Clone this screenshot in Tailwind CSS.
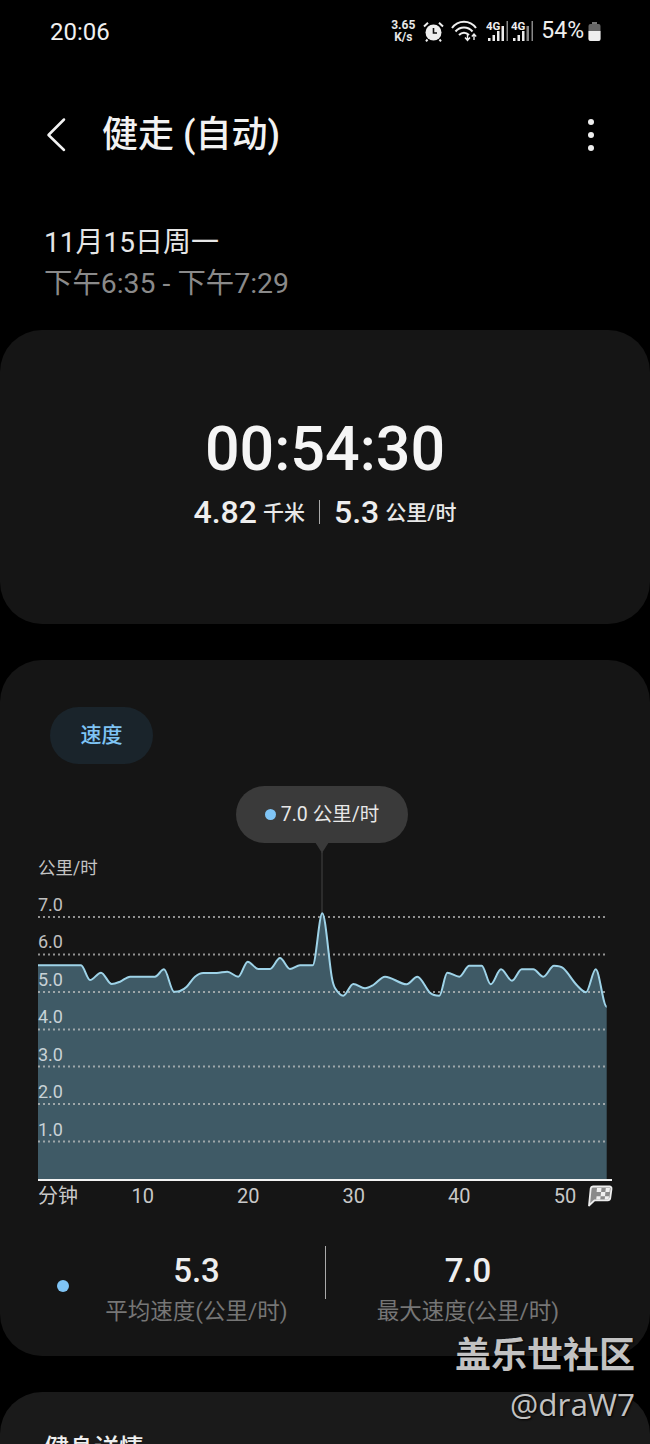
<!DOCTYPE html>
<html lang="zh-CN">
<head>
<meta charset="utf-8">
<title>健走 (自动)</title>
<script src="https://cdn.jsdelivr.net/npm/@tailwindcss/browser@4"></script>
</head>
<body class="bg-black">
<div class="relative w-[650px] h-[1444px] overflow-hidden bg-black text-white font-['Roboto','Noto_Sans_CJK_SC',sans-serif]">

  <!-- status bar -->
  <div class="flex items-center h-[62px] pl-[50px] pr-[49px]">
    <span class="text-[24px] text-[#f0f0f0] mt-[1px]">20:06</span>
    <div class="ml-auto flex items-center">
      <div class="w-[26px] text-center text-[12px] leading-[12px] font-bold text-[#e8e8e8]">3.65<br>K/s</div>
      <svg class="ml-[7px]" width="21" height="21" viewBox="0 0 21 21">
        <circle cx="10.5" cy="11.5" r="8" fill="#eee"/>
        <path d="M10.5 7v5h3.5" stroke="#111" stroke-width="1.6" fill="none"/>
        <path d="M1 5.5 5 1.8M20 5.5 16 1.8M4.5 18.5 3 20.3M16.5 18.5 18 20.3" stroke="#eee" stroke-width="2"/>
      </svg>
      <svg class="ml-[7px]" width="29" height="22" viewBox="0 0 29 22" fill="none" stroke="#eee" stroke-width="2">
        <path d="M1 8C7-.5 19-.5 25 8M4.5 11.500C9 6 17 6 21.500 11.500M8 15c3-3 7-3 10 0"/>
        <path d="M16.500 14v6M14 17.500l2.500 3 2.500-3M23 20v-6M20.800 16.500l2.200-2.500 2.200 2.500" stroke-width="1.400"/>
      </svg>
      <svg class="ml-[6px]" width="22" height="22" viewBox="0 0 22 22">
        <text x="0" y="9.500" font-size="11.500" font-weight="700" fill="#eee">4G</text>
        <path d="M2 18h2.500v3H2zM6.500 15h2.500v6H6.500zM11 11h2.500v10H11zM15.500 6h2.500v15h-2.500z" fill="#eee"/>
        <path d="M20.500 1h1.500v20h-1.500z" fill="#888"/>
      </svg>
      <svg class="ml-[3px]" width="23" height="22" viewBox="0 0 23 22">
        <text x="0" y="9.500" font-size="11.500" font-weight="700" fill="#eee">4G</text>
        <path d="M2 18h2.500v3H2zM6.500 15h2.500v6H6.500zM11 11h2.500v10H11z" fill="#eee"/>
        <path d="M15.500 6h2.500v15h-2.500zM20.500 1H22v20h-1.500z" fill="#888"/>
      </svg>
      <span class="ml-[7px] text-[23px] text-[#eee]">54%</span>
      <svg class="ml-[4px]" width="13" height="19" viewBox="0 0 13 19">
        <path d="M4 0h5v2H4z" fill="#777"/>
        <rect x="0.500" y="2" width="12" height="17" rx="2" fill="#666"/>
        <path d="M.5 9h12v8a2 2 0 0 1-2 2h-8a2 2 0 0 1-2-2z" fill="#eee"/>
      </svg>
    </div>
  </div>

  <!-- header -->
  <div class="flex items-center h-[54px] mt-[46px] pl-[46px] pr-[56px]">
    <svg width="22" height="36" viewBox="0 0 22 36" fill="none" stroke="#f2f2f2" stroke-width="2.500" stroke-linecap="round" stroke-linejoin="round">
      <path d="M18 2.500 2.500 18 18 33"/>
    </svg>
    <h1 class="ml-[34px] text-[36px] leading-none font-medium text-[#f2f2f2]">健走 (自动)</h1>
    <div class="ml-auto flex flex-col gap-[7px]">
      <span class="w-[6px] h-[6px] rounded-full bg-[#eee]"></span>
      <span class="w-[6px] h-[6px] rounded-full bg-[#eee]"></span>
      <span class="w-[6px] h-[6px] rounded-full bg-[#eee]"></span>
    </div>
  </div>

  <!-- date -->
  <div class="pl-[44px] mt-[60px]">
    <p class="text-[28px] leading-[41px] text-[#e6e6e6]">11月15日周一</p>
    <p class="text-[28.400px] leading-[41px] text-[#8a8a8a]">下午6:35 - 下午7:29</p>
  </div>

  <!-- summary card -->
  <section class="mt-[26px] h-[294px] rounded-[42px] bg-[#151515] flex flex-col items-center pt-[84px]">
    <p class="text-[61px] leading-[70px] font-medium text-[#f5f5f5]">00:54:30</p>
    <div class="flex items-center mt-[15px] h-[26px]">
      <span class="text-[32px] font-medium text-[#eee]">4.82</span>
      <span class="ml-[6px] mt-[3px] text-[21px] font-medium text-[#e8e8e8]">千米</span>
      <span class="w-px h-[24px] bg-[#aaa] mx-[14px]"></span>
      <span class="text-[32px] font-medium text-[#eee]">5.3</span>
      <span class="ml-[6px] mt-[3px] text-[21px] font-medium text-[#e8e8e8]">公里/时</span>
    </div>
  </section>

  <!-- speed card -->
  <section class="relative mt-[36px] h-[696px] rounded-[42px] bg-[#151515] pt-[47px]">
    <div class="ml-[50px] w-[103px] h-[57px] rounded-full bg-[#1a242b] flex items-center justify-center text-[21px] font-medium text-[#7fc4f5]">速度</div>

    <div class="ml-[236px] mt-[22px] w-[172px] h-[57px] rounded-full bg-[#3a3a3a] flex items-center justify-center text-[19.500px] text-[#e8e8e8]">
      <span class="w-[11px] h-[11px] rounded-full bg-[#7fc4f5] mr-[5px]"></span>7.0 公里/时
    </div>

    <div class="relative h-[340px]">
      <svg id="speedChart" class="block" width="650" height="340" viewBox="0 843 650 340">
        <path d="M315 842h14l-7 11z" fill="#3a3a3a"/>
        <path d="M322 852v62" stroke="#444" stroke-width="1"/>
        <path id="speedFill" fill="#3f5a66"/>
        <g stroke="#c8c8c8" stroke-width="2" stroke-dasharray="2 3" opacity="0.7">
          <path d="M38 917h570M38 954.500h570M38 992h570M38 1029.500h570M38 1066.500h570M38 1104h570M38 1141.500h570"/>
        </g>
        <path id="speedLine" fill="none" stroke="#9ed3e8" stroke-width="2"/>
        <path d="M38 1180h574" stroke="#f2f2f2" stroke-width="2"/>
      </svg>
      <!-- axis labels over the plot -->
      <span class="absolute left-[38px] top-[14px] text-[17.500px] leading-[22px] text-[#c4c4c4]">公里/时</span>
      <div class="absolute left-[38px] top-[43px] text-[18px] leading-[37.420px] text-[#c0c0c0]">
        <p>7.0</p><p>6.0</p><p class="text-[#c8d2d6]">5.0</p><p class="text-[#c8d2d6]">4.0</p><p class="text-[#c8d2d6]">3.0</p><p class="text-[#c8d2d6]">2.0</p><p class="text-[#c8d2d6]">1.0</p>
      </div>
    </div>

    <div class="flex items-center h-[26px] pl-[38px] text-[20px] text-[#c8c8c8]">
      <span class="w-[52px]">分钟</span>
      <span class="w-[105.500px] text-center">10</span>
      <span class="w-[105.500px] text-center">20</span>
      <span class="w-[105.500px] text-center">30</span>
      <span class="w-[105.500px] text-center">40</span>
      <span class="w-[106px] text-center">50</span>
      <!-- chequered finish flag -->
      <svg class="-ml-[31px]" width="26" height="24" viewBox="0 0 26 24">
        <path d="M6 2.500h16.500a2 2 0 0 1 2 2.300l-1.300 9.500a2.500 2.500 0 0 1-2.500 2H7.500L2 21.500 3.700 4.500A2.500 2.500 0 0 1 6 2.500z" fill="#8a8a8a" stroke="#eee" stroke-width="1.800" stroke-linejoin="round"/>
        <path d="M10 4h4.500l-.4 4H9.600zM18.800 4H23l-.5 4h-4.100zM14.100 8h4.300l-.4 4.200h-4.400zM9.600 12.200H13.600l-.3 3.300H9.200zM18 12.200h4l-.4 3.300h-3.900z" fill="#f0f0f0"/>
      </svg>
    </div>

    <!-- stats -->
    <div class="flex items-start h-[80px] mt-[37px]">
      <div class="relative w-[325px] h-full text-center pl-[68px]">
        <span class="absolute left-[57px] top-[34px] w-[12px] h-[12px] rounded-full bg-[#7fc4f5]"></span>
        <p class="text-[33px] leading-[50px] font-medium text-[#eee]">5.3</p>
        <p class="text-[22.500px] leading-[30px] text-[#767676]">平均速度(公里/时)</p>
      </div>
      <span class="w-px h-[53px] bg-[#aaa]"></span>
      <div class="w-[284px] text-center">
        <p class="text-[33px] leading-[50px] font-medium text-[#eee]">7.0</p>
        <p class="text-[22.500px] leading-[30px] text-[#767676]">最大速度(公里/时)</p>
      </div>
    </div>
  </section>

  <!-- detail card, cut off by the screen -->
  <section class="mt-[36px] h-[200px] rounded-[42px] bg-[#1a1a1a] pl-[44px] pt-[40px]">
    <h2 class="text-[25px] leading-[34px] font-medium text-[#eee]">健身详情</h2>
  </section>

  <!-- watermark -->
  <div class="absolute right-[15px] top-[1333px] text-right text-[#c2c2c2] [text-shadow:1px_1px_2px_#000]">
    <p class="text-[36px] leading-[46px] font-bold">盖乐世社区</p>
    <p class="mt-[3px] text-[31.500px] leading-[44px] font-['Open_Sans',sans-serif]">@draW7</p>
  </div>
</div>

<script>
  // speed samples in page coordinates, read off the curve
  const pts = [[38,965.3],[81,965.3],[90,980],[101,972.7],[111.7,984],[120,981.7],[130,976.7],[155,976.7],[164,969.3],[174,991.7],[180,991],[186.7,986.7],[195,976.7],[203.3,973],[216.7,973],[227.3,971.7],[238.3,976.7],[247.7,961.7],[258.3,969],[270,969],[280,958],[290,969],[300,965.3],[312.7,965.3],[322.3,913.3],[331.7,976.7],[335,988],[343.3,995.7],[353.3,984],[365,988.3],[373.3,985],[385,976.7],[406.7,984.3],[417.3,976.7],[430,992.7],[439.3,995.7],[447.3,972.7],[459.3,976.7],[469.3,965.7],[481.7,965.7],[490.7,984.3],[501,969.3],[512,980.7],[521.7,969.3],[533.3,969.3],[543.3,976.7],[554,965.7],[563.3,968.3],[576.7,985],[586,992.3],[595.7,969.3],[606.7,1006.7]];
  // flat tangent at turning points so the curve does not overshoot
  const slope = i => {
    const a = pts[i - 1], b = pts[i], c = pts[i + 1];
    if (!a || !c || (b[1] - a[1]) * (c[1] - b[1]) <= 0) return 0;
    return (c[1] - a[1]) / (c[0] - a[0]);
  };
  let d = `M${pts[0][0]} ${pts[0][1]}`;
  for (let i = 0; i < pts.length - 1; i++) {
    const p1 = pts[i], p2 = pts[i + 1], h = (p2[0] - p1[0]) / 3;
    d += `C${(p1[0] + h).toFixed(1)} ${(p1[1] + slope(i) * h).toFixed(1)} ${(p2[0] - h).toFixed(1)} ${(p2[1] - slope(i + 1) * h).toFixed(1)} ${p2[0]} ${p2[1]}`;
  }
  document.getElementById("speedLine").setAttribute("d", d);
  document.getElementById("speedFill").setAttribute("d", d + "L606.7 1180L38 1180Z");
</script>
</body>
</html>
